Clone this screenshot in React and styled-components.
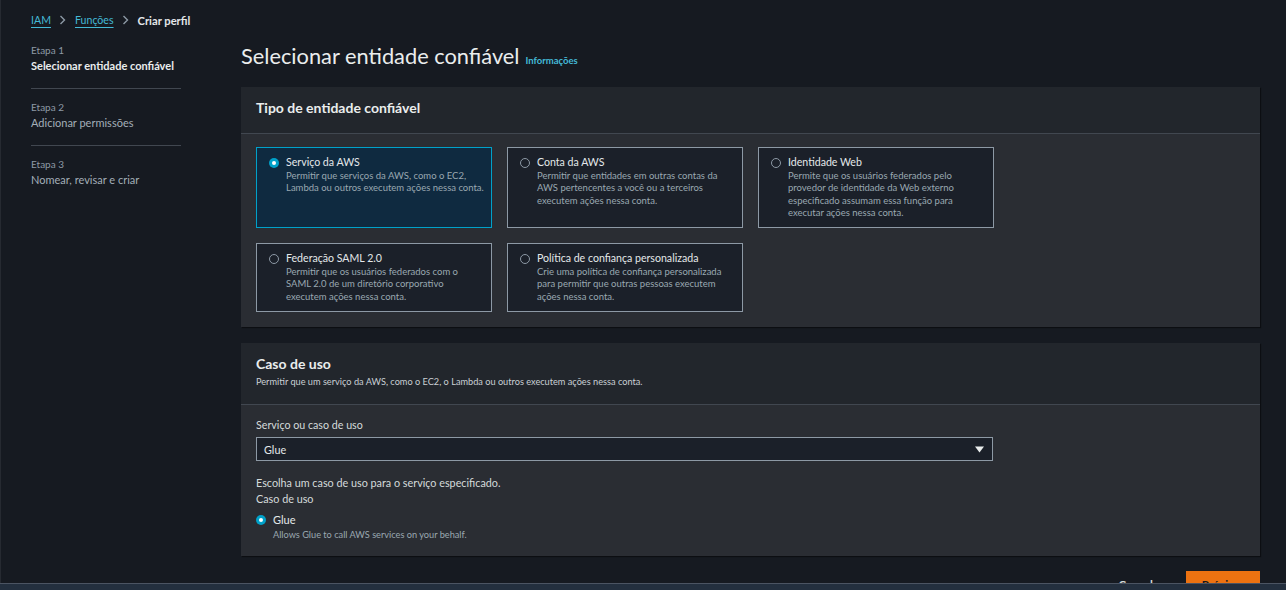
import React from "react";
import styled, { createGlobalStyle } from "styled-components";

const GlobalStyle = createGlobalStyle`
  html, body {
    margin: 0;
    padding: 0;
    background: #161a21;
    overflow: hidden;
  }
  body {
    font-family: Lato, "Open Sans", "Liberation Sans", sans-serif;
    color: #d5dbdb;
  }
  * { box-sizing: border-box; }
`;

const Page = styled.div`
  min-height: 100vh;
  border-left: 1px solid #262a31;
  padding: 10px 26px 0 30px;
`;

const Breadcrumbs = styled.nav`
  display: flex;
  align-items: center;
  height: 20px;
  font-size: 10.6px;
`;

const Crumb = styled.a`
  color: ${(p) => (p.$current ? "#e4e8ea" : "#44b9d6")};
  font-weight: ${(p) => (p.$current ? 700 : 400)};
  font-size: ${(p) => (p.$current ? "11.2px" : "inherit")};
  text-decoration: ${(p) => (p.$current ? "none" : "underline")};
  text-underline-offset: 3px;
`;

const Chevron = styled.svg`
  width: 7px;
  height: 10px;
  margin: 0 9px 0 8px;
  flex-shrink: 0;
`;

const Layout = styled.div`
  display: flex;
  margin-top: 2px;
`;

const StepNav = styled.ol`
  list-style: none;
  margin: 0;
  padding: 0;
  width: 150px;
  flex-shrink: 0;
  margin-right: 60px;
`;

const Step = styled.li`
  padding: 11px 0 13px;
  border-bottom: ${(p) => (p.$last ? "none" : "1px solid #414750")};
`;

const StepLabel = styled.div`
  font-size: 10px;
  line-height: 14px;
  color: #8d99a5;
`;

const StepTitle = styled.div`
  font-size: 11px;
  line-height: 18px;
  white-space: nowrap;
  font-weight: ${(p) => (p.$active ? 700 : 400)};
  color: ${(p) => (p.$active ? "#eaeded" : "#a3aeb8")};
`;

const Main = styled.main`
  flex: 1;
  min-width: 0;
`;

const Heading = styled.h1`
  margin: 9px 0 16px;
  height: 30px;
  font-size: 21.8px;
  line-height: 30px;
  font-weight: 400;
  color: #eaeded;
  display: flex;
  align-items: baseline;
  gap: 6px;
`;

const InfoLink = styled.a`
  font-size: 9.5px;
  line-height: 12px;
  font-weight: 700;
  color: #44b9d6;
`;

const Container = styled.section`
  background: #2a2d33;
  box-shadow: 1px 1px 1px rgba(0, 0, 0, 0.45);
  margin-bottom: ${(p) => p.$mb || "0"};
`;

const ContainerHeader = styled.header`
  background: #22262c;
  border-bottom: 1px solid #414750;
  padding: 11px 15px 15px;
`;

const ContainerTitle = styled.h2`
  margin: 0;
  font-size: 14px;
  line-height: 20px;
  font-weight: 700;
  color: #eaeded;
`;

const ContainerDesc = styled.p`
  margin: 0;
  font-size: 9.2px;
  line-height: 15px;
  color: #c9cfd4;
`;

const TileGrid = styled.div`
  display: grid;
  grid-template-columns: repeat(3, 236px);
  gap: 15px;
  padding: 13px 15px 15px;
`;

const Tile = styled.label`
  display: flex;
  align-items: flex-start;
  gap: 7px;
  padding: 7px 6px 8px 12px;
  border: 1px solid ${(p) => (p.$selected ? "#00a1c9" : "#8d99a5")};
  background: ${(p) => (p.$selected ? "#0f2a40" : "#1b2029")};
  cursor: pointer;
`;

const RadioDot = styled.span`
  width: 10px;
  height: 10px;
  border-radius: 50%;
  flex-shrink: 0;
  margin-top: ${(p) => p.$mt || "2.5px"};
  border: ${(p) => (p.$checked ? "none" : "1px solid #8d99a5")};
  background: ${(p) => (p.$checked ? "#00a1c9" : "transparent")};
  position: relative;
  &::after {
    content: "";
    display: ${(p) => (p.$checked ? "block" : "none")};
    position: absolute;
    left: 3px;
    top: 3px;
    width: 4px;
    height: 4px;
    border-radius: 50%;
    background: #ffffff;
  }
`;

const TileText = styled.div`
  display: flex;
  flex-direction: column;
`;

const TileTitle = styled.span`
  font-size: 10.6px;
  line-height: 15px;
  color: #e4e8ea;
`;

const TileDesc = styled.span`
  font-size: 9.5px;
  line-height: 12.3px;
  white-space: pre-line;
  color: #9aa8b1;
`;

const Body = styled.div`
  padding: 12px 15px 15px;
`;

const FieldLabel = styled.div`
  font-size: 10.7px;
  line-height: 16px;
  color: #d5dbdb;
`;

const Select = styled.div`
  margin-top: 4px;
  width: 737px;
  height: 24px;
  border: 1px solid #8d99a5;
  background: #1b2029;
  display: flex;
  align-items: center;
  justify-content: space-between;
  padding: 0 8px 0 7px;
  font-size: 10.8px;
  color: #e4e8ea;
`;

const HelpText = styled.div`
  margin-top: ${(p) => p.$mt || "0"};
  font-size: 10.8px;
  line-height: 16px;
  color: #d5dbdb;
`;

const RadioRow = styled.div`
  display: flex;
  align-items: flex-start;
  gap: 7px;
  margin-top: 5px;
`;

const RadioLabel = styled.span`
  font-size: 11px;
  line-height: 16px;
  color: #e4e8ea;
`;

const RadioDesc = styled.span`
  font-size: 9.2px;
  line-height: 13px;
  color: #9aa8b1;
`;

const Actions = styled.div`
  display: flex;
  justify-content: flex-end;
  align-items: center;
  gap: 23px;
  margin-top: 15px;
`;

const LinkButton = styled.button`
  background: none;
  border: none;
  padding: 0;
  font-family: inherit;
  font-size: 11.5px;
  font-weight: 700;
  color: #d5dbdb;
`;

const PrimaryButton = styled.button`
  background: #ec7211;
  border: none;
  height: 26px;
  width: 74px;
  font-family: inherit;
  font-size: 11.5px;
  font-weight: 700;
  color: #16191f;
`;

const BottomBar = styled.div`
  position: fixed;
  left: 0;
  right: 0;
  bottom: 0;
  height: 7px;
  border-top: 1px solid #4b5462;
  background: #232f3e;
`;

const ChevronIcon = () => (
  <Chevron viewBox="0 0 7 10">
    <polyline points="1.5,1 5.5,5 1.5,9" fill="none" stroke="#8d99a5" strokeWidth="1.4" />
  </Chevron>
);

const tiles = [
  {
    title: "Serviço da AWS",
    desc: "Permitir que serviços da AWS, como o EC2,\nLambda ou outros executem ações nessa conta.",
    selected: true,
  },
  {
    title: "Conta da AWS",
    desc: "Permitir que entidades em outras contas da\nAWS pertencentes a você ou a terceiros\nexecutem ações nessa conta.",
  },
  {
    title: "Identidade Web",
    desc: "Permite que os usuários federados pelo\nprovedor de identidade da Web externo\nespecificado assumam essa função para\nexecutar ações nessa conta.",
  },
  {
    title: "Federação SAML 2.0",
    desc: "Permitir que os usuários federados com o\nSAML 2.0 de um diretório corporativo\nexecutem ações nessa conta.",
  },
  {
    title: "Política de confiança personalizada",
    desc: "Crie uma política de confiança personalizada\npara permitir que outras pessoas executem\nações nessa conta.",
  },
];

export default function App() {
  return (
    <>
      <GlobalStyle />
      <Page>
        <Breadcrumbs>
          <Crumb>IAM</Crumb>
          <ChevronIcon />
          <Crumb>Funções</Crumb>
          <ChevronIcon />
          <Crumb $current>Criar perfil</Crumb>
        </Breadcrumbs>
        <Layout>
          <StepNav>
            <Step>
              <StepLabel>Etapa 1</StepLabel>
              <StepTitle $active>Selecionar entidade confiável</StepTitle>
            </Step>
            <Step>
              <StepLabel>Etapa 2</StepLabel>
              <StepTitle>Adicionar permissões</StepTitle>
            </Step>
            <Step $last>
              <StepLabel>Etapa 3</StepLabel>
              <StepTitle>Nomear, revisar e criar</StepTitle>
            </Step>
          </StepNav>
          <Main>
            <Heading>
              Selecionar entidade confiável <InfoLink>Informações</InfoLink>
            </Heading>
            <Container $mb="16px">
              <ContainerHeader>
                <ContainerTitle>Tipo de entidade confiável</ContainerTitle>
              </ContainerHeader>
              <TileGrid>
                {tiles.map((t) => (
                  <Tile key={t.title} $selected={t.selected}>
                    <RadioDot $checked={t.selected} />
                    <TileText>
                      <TileTitle>{t.title}</TileTitle>
                      <TileDesc>{t.desc}</TileDesc>
                    </TileText>
                  </Tile>
                ))}
              </TileGrid>
            </Container>
            <Container>
              <ContainerHeader>
                <ContainerTitle>Caso de uso</ContainerTitle>
                <ContainerDesc>
                  Permitir que um serviço da AWS, como o EC2, o Lambda ou outros executem ações nessa conta.
                </ContainerDesc>
              </ContainerHeader>
              <Body>
                <FieldLabel>Serviço ou caso de uso</FieldLabel>
                <Select>
                  <span>Glue</span>
                  <svg width="9" height="7" viewBox="0 0 9 7">
                    <polygon points="0,0.5 9,0.5 4.5,6.5" fill="#eaeded" />
                  </svg>
                </Select>
                <HelpText $mt="14px">Escolha um caso de uso para o serviço especificado.</HelpText>
                <HelpText>Caso de uso</HelpText>
                <RadioRow>
                  <RadioDot $checked $mt="3px" />
                  <TileText>
                    <RadioLabel>Glue</RadioLabel>
                    <RadioDesc>Allows Glue to call AWS services on your behalf.</RadioDesc>
                  </TileText>
                </RadioRow>
              </Body>
            </Container>
            <Actions>
              <LinkButton>Cancelar</LinkButton>
              <PrimaryButton>Próximo</PrimaryButton>
            </Actions>
          </Main>
        </Layout>
      </Page>
      <BottomBar />
    </>
  );
}
